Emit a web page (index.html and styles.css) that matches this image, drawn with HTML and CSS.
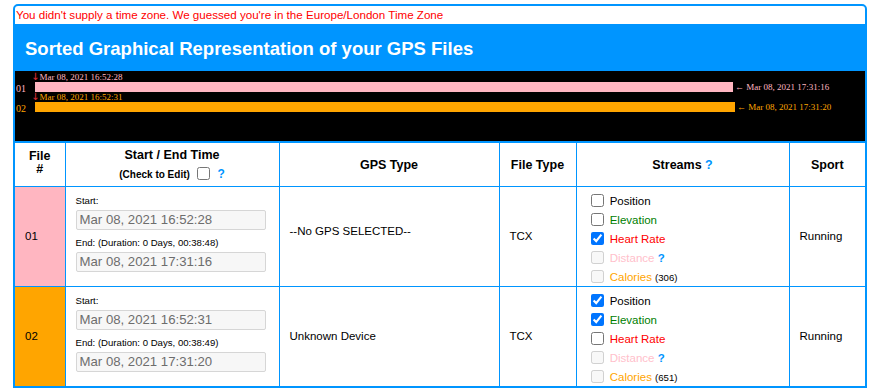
FILE: index.html
```html
<!DOCTYPE html>
<html lang="en">
<head>
    <meta charset="UTF-8">
    <meta name="viewport" content="width=device-width, initial-scale=1.0">
    <title>GPS File Merge</title>
    <link rel="stylesheet" href="styles.css">
</head>
<body>
    <div class="merge-box">
        <div class="tz-note">You didn't supply a time zone. We guessed you're in the Europe/London Time Zone</div>

        <div class="merge-header">
            <h1 class="title">Sorted Graphical Representation of your GPS Files</h1>
        </div>

        <div class="timeline-frame">
            <div class="timeline">
                <div class="track pink">
                    <div class="start-label"><span class="arrow">&darr;</span>Mar 08, 2021 16:52:28</div>
                    <div class="bar-row">
                        <span class="file-no">01</span>
                        <span class="bar" style="width: 698px"></span>
                        <span class="end-label">&larr; Mar 08, 2021 17:31:16</span>
                    </div>
                </div>
                <div class="track orange">
                    <div class="start-label"><span class="arrow">&darr;</span>Mar 08, 2021 16:52:31</div>
                    <div class="bar-row">
                        <span class="file-no">02</span>
                        <span class="bar" style="width: 700px"></span>
                        <span class="end-label">&larr; Mar 08, 2021 17:31:20</span>
                    </div>
                </div>
            </div>
        </div>

        <table class="file-table">
            <colgroup>
                <col style="width: 50px">
                <col style="width: 214px">
                <col style="width: 220px">
                <col style="width: 77px">
                <col style="width: 213px">
                <col style="width: 76px">
            </colgroup>
            <thead>
                <tr>
                    <th class="th-file">File<br>#</th>
                    <th class="th-time">
                        <div class="th-main">Start / End Time</div>
                        <div class="th-sub">(Check to Edit) <input type="checkbox" class="edit-check"> <span class="help">?</span></div>
                    </th>
                    <th>GPS Type</th>
                    <th>File Type</th>
                    <th>Streams <span class="help">?</span></th>
                    <th>Sport</th>
                </tr>
            </thead>
            <tbody>
                <tr>
                    <td class="file-cell pink">01</td>
                    <td class="time-cell">
                        <div class="time-label">Start:</div>
                        <input type="text" class="time-input" value="Mar 08, 2021 16:52:28" disabled>
                        <div class="time-label end">End: (Duration: 0 Days, 00:38:48)</div>
                        <input type="text" class="time-input" value="Mar 08, 2021 17:31:16" disabled>
                    </td>
                    <td class="gps-cell none">--No GPS SELECTED--</td>
                    <td>TCX</td>
                    <td class="streams">
                        <label class="stream"><input type="checkbox"> <span class="s-position">Position</span></label>
                        <label class="stream"><input type="checkbox"> <span class="s-elevation">Elevation</span></label>
                        <label class="stream"><input type="checkbox" checked> <span class="s-heart">Heart Rate</span></label>
                        <label class="stream"><input type="checkbox" disabled> <span class="s-distance">Distance</span> <span class="help">?</span></label>
                        <label class="stream"><input type="checkbox" disabled> <span class="s-calories">Calories</span> <span class="count">(306)</span></label>
                    </td>
                    <td>Running</td>
                </tr>
                <tr>
                    <td class="file-cell orange">02</td>
                    <td class="time-cell">
                        <div class="time-label">Start:</div>
                        <input type="text" class="time-input" value="Mar 08, 2021 16:52:31" disabled>
                        <div class="time-label end">End: (Duration: 0 Days, 00:38:49)</div>
                        <input type="text" class="time-input" value="Mar 08, 2021 17:31:20" disabled>
                    </td>
                    <td class="gps-cell">Unknown Device</td>
                    <td>TCX</td>
                    <td class="streams">
                        <label class="stream"><input type="checkbox" checked> <span class="s-position">Position</span></label>
                        <label class="stream"><input type="checkbox" checked> <span class="s-elevation">Elevation</span></label>
                        <label class="stream"><input type="checkbox"> <span class="s-heart">Heart Rate</span></label>
                        <label class="stream"><input type="checkbox" disabled> <span class="s-distance">Distance</span> <span class="help">?</span></label>
                        <label class="stream"><input type="checkbox" disabled> <span class="s-calories">Calories</span> <span class="count">(651)</span></label>
                    </td>
                    <td>Running</td>
                </tr>
            </tbody>
        </table>
    </div>
</body>
</html>
```

FILE: styles.css
```css
* { margin: 0; padding: 0; box-sizing: border-box; }

body {
    background: #fff;
    color: #000;
    font-family: 'Liberation Sans', Arial, sans-serif;
    font-size: 11.5px;
    padding: 4px 7px 0 13px;
}

.merge-box {
    width: 854px;
    border: 2px solid #0095ff;
    border-radius: 5px 5px 0 0;
    background: #fff;
}

.tz-note {
    color: #ff0000;
    font-size: 11.6px;
    height: 18px;
    line-height: 18px;
    padding-left: 1px;
}

.merge-header {
    background: #0095ff;
    height: 47px;
    padding: 13px 0 0 10px;
}

.title {
    color: #fff;
    font-size: 18.5px;
    font-weight: bold;
    line-height: 24px;
}

.timeline-frame {
    background: #0095ff;
    padding-bottom: 2px;
}

.timeline {
    background: #000;
    height: 70px;
    padding-top: 1px;
    font-family: 'Liberation Serif', 'Times New Roman', serif;
    font-size: 9px;
}

.track.pink { color: #ffb6c1; }
.track.orange { color: #ffa500; }

.start-label {
    height: 10px;
    line-height: 10px;
    padding-left: 16px;
    white-space: nowrap;
}

.arrow {
    color: #e0303a;
    font-size: 10px;
    font-family: 'DejaVu Sans', sans-serif;
}

.bar-row {
    display: flex;
    align-items: center;
    height: 10px;
}

.file-no {
    width: 20px;
    padding-left: 1px;
    font-size: 10px;
    margin-top: 3px;
}

.bar {
    height: 10px;
}

.pink .bar { background: #ffb6c1; }
.orange .bar { background: #ffa500; }

.end-label {
    padding-left: 2px;
    white-space: nowrap;
}

.file-table {
    width: 850px;
    border-collapse: collapse;
    table-layout: fixed;
}

.file-table th,
.file-table td {
    border: 1px solid #0095ff;
    vertical-align: middle;
}

.file-table tr > :first-child { border-left: none; }
.file-table tr > :last-child { border-right: none; }
.file-table tbody tr:last-child td { border-bottom: none; }
.file-table thead th { border-top: none; }

.file-table th {
    height: 43px;
    padding-top: 2px;
    font-size: 12.5px;
    font-weight: bold;
    line-height: 14px;
    text-align: center;
}

.file-table th.th-file {
    padding: 0 0 2px;
    line-height: 13px;
}

.file-table th.th-time {
    padding-top: 1px;
}

.th-main {
    height: 16px;
    line-height: 16px;
}

.th-sub {
    height: 16px;
    font-size: 10px;
    line-height: 16px;
    margin-top: 3px;
}

.edit-check {
    width: 13px;
    height: 13px;
    margin: 0 3px 0 4px;
    vertical-align: -2px;
}

.th-sub .help {
    font-size: 12px;
    margin-left: 2px;
}

.help {
    color: #0095ff;
    font-weight: bold;
}

.file-table td {
    height: 99px;
    padding-left: 10px;
}

.file-cell {
    padding-left: 9px;
}

.file-cell.pink { background: #ffb6c1; }
.file-cell.orange { background: #ffa500; }

.time-cell {
    padding-bottom: 6px;
}

.time-label {
    font-size: 9.6px;
    line-height: 12px;
    margin-bottom: 3px;
}

.time-label.end {
    margin-top: 7px;
}

.time-input {
    display: block;
    width: 190px;
    height: 20px;
    border: 1px solid #d6d6d6;
    border-radius: 2px;
    background: #f7f7f7;
    color: #6d6d6d;
    font-family: 'Liberation Sans', Arial, sans-serif;
    font-size: 13.2px;
    padding: 0 3px;
}

.gps-cell.none {
    padding-bottom: 10px;
}

.streams {
    padding-left: 12px;
    padding-top: 5px;
}

.stream {
    display: block;
    line-height: 19px;
    height: 19px;
}

.stream:last-child {
    height: 18px;
}

.stream input {
    width: 13px;
    height: 13px;
    margin: 0 3px 0 4px;
    vertical-align: -2px;
}

.stream .help { font-size: 11.5px; }

.s-position { color: #000; }
.s-elevation { color: #008000; }
.s-heart { color: #ff0000; }
.s-distance { color: #ffc0cb; }
.s-calories { color: #ffa500; }

.count {
    font-size: 9.6px;
}
```
